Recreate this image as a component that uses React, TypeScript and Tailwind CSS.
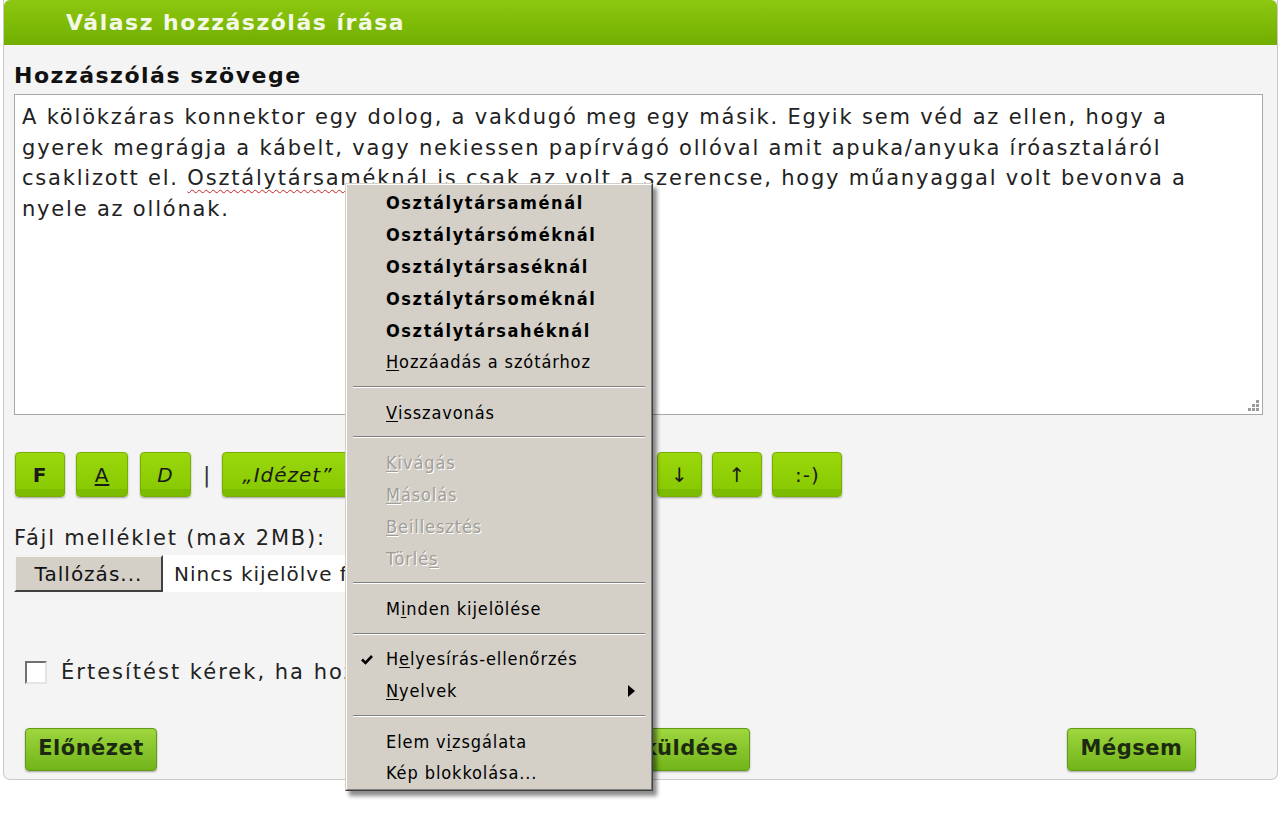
import React from "react";

type MenuItem =
  | { kind: "sep" }
  | {
      kind?: "item";
      label: string;
      key?: number;
      bold?: boolean;
      disabled?: boolean;
      checked?: boolean;
      submenu?: boolean;
    };

const menuItems: MenuItem[] = [
  { label: "Osztálytársaménál", bold: true },
  { label: "Osztálytársóméknál", bold: true },
  { label: "Osztálytársaséknál", bold: true },
  { label: "Osztálytársoméknál", bold: true },
  { label: "Osztálytársahéknál", bold: true },
  { label: "Hozzáadás a szótárhoz", key: 0 },
  { kind: "sep" },
  { label: "Visszavonás", key: 0 },
  { kind: "sep" },
  { label: "Kivágás", key: 0, disabled: true },
  { label: "Másolás", key: 0, disabled: true },
  { label: "Beillesztés", key: 0, disabled: true },
  { label: "Törlés", key: 5, disabled: true },
  { kind: "sep" },
  { label: "Minden kijelölése", key: 1 },
  { kind: "sep" },
  { label: "Helyesírás-ellenőrzés", key: 1, checked: true },
  { label: "Nyelvek", key: 0, submenu: true },
  { kind: "sep" },
  { label: "Elem vizsgálata", key: 6 },
  { label: "Kép blokkolása..." },
];

const AccessLabel = ({ label, index }: { label: string; index?: number }) => {
  if (index === undefined) return <>{label}</>;
  return (
    <>
      {label.slice(0, index)}
      <span className="underline underline-offset-2">{label[index]}</span>
      {label.slice(index + 1)}
    </>
  );
};

const ContextMenu = () => (
  <div className="absolute left-[345px] top-[183px] z-10 w-[308px] border border-t-[#d4d0c8] border-l-[#d4d0c8] border-r-[#404040] border-b-[#404040] bg-[#d4d0c8] shadow-[4px_5px_4px_rgba(0,0,0,0.45)] font-['DejaVu_Sans_Condensed','DejaVu_Sans',sans-serif] text-[18px] text-black">
    <div className="border border-t-white border-l-white border-r-[#808080] border-b-[#808080] pt-[2px]">
      {menuItems.map((item, i) =>
        item.kind === "sep" ? (
          <div key={i} className="flex h-[18.6px] items-center px-[6px]">
            <div className="h-[2px] w-full border-t border-t-[#808080] border-b border-b-white" />
          </div>
        ) : (
          <div
            key={i}
            className={`relative flex h-[31.8px] items-center pl-[39px] ${
              item.bold ? "font-bold tracking-[1.6px]" : "tracking-[0.9px]"
            } ${
              item.disabled
                ? "text-[#a09e98] [text-shadow:1px_1px_0_#ffffff]"
                : ""
            }`}
          >
            {item.checked && (
              <svg
                className="absolute left-[14px] top-[11px]"
                width="12"
                height="11"
                viewBox="0 0 12 11"
              >
                <path d="M1 5.5 L4.5 9 L11 2" stroke="#000" strokeWidth="2.6" fill="none" />
              </svg>
            )}
            <AccessLabel label={item.label} index={item.key} />
            {item.submenu && (
              <svg
                className="absolute right-[16px] top-[10px]"
                width="7"
                height="12"
                viewBox="0 0 7 12"
              >
                <path d="M0 0 L7 6 L0 12 Z" fill="#000" />
              </svg>
            )}
          </div>
        )
      )}
    </div>
  </div>
);

const ToolButton = ({
  children,
  className = "",
}: {
  children: React.ReactNode;
  className?: string;
}) => (
  <button className={`relative flex h-[45px] items-center justify-center overflow-hidden rounded-[4px] border border-[#79ad00] bg-[linear-gradient(#9ad80c,#86c700)] text-[20px] tracking-[1px] text-[#1a1a1a] shadow-[0_1px_2px_rgba(0,0,0,0.35)] ${className}`}>
    <span className="relative z-[1]">{children}</span>
    <span className="absolute bottom-0 left-0 right-0 h-[7px] bg-[#7bbb00]" />
  </button>
);

const ActionButton = ({
  children,
  className = "",
}: {
  children: React.ReactNode;
  className?: string;
}) => (
  <button className={`flex h-[43px] items-center justify-center rounded-[4px] border border-[#5e9a16] bg-[linear-gradient(#9ed63e,#72b41a)] text-[21px] font-bold tracking-[0.5px] text-[#1c2a10] shadow-[0_1px_2px_rgba(0,0,0,0.35)] ${className}`}>
    {children}
  </button>
);

export default function App() {
  return (
    <div className="relative min-h-screen bg-white font-['DejaVu_Sans',sans-serif] text-[#1f1f1f]">
      <div className="ml-[3px] w-[1275px] rounded-b-[7px] border border-t-0 border-[#c9c9c9] bg-[#f4f4f4] pb-[8px]">
        {/* heading bar */}
        <div className="flex h-[45px] items-center rounded-t-[6px] bg-[linear-gradient(#8cc810,#72ae00)] pl-[62px] text-[22px] font-bold tracking-[1.5px] text-[#f4f8e6]">
          Válasz hozzászólás írása
        </div>

        <div className="px-[10px]">
          <div className="pt-[16px] text-[22px] font-bold leading-[30px] tracking-[1.5px] text-[#111]">
            Hozzászólás szövege
          </div>

          {/* message box */}
          <div className="relative mt-[3px] h-[321px] w-[1249px] border border-[#a8a8a8] bg-white px-[7px] pt-[7px] text-[21px] leading-[30.5px] tracking-[1.8px] text-[#222]">
            A kölökzáras konnektor egy dolog, a vakdugó meg egy másik. Egyik sem véd az ellen, hogy a
            <br />
            gyerek megrágja a kábelt, vagy nekiessen papírvágó ollóval amit apuka/anyuka íróasztaláról
            <br />
            csaklizott el.{" "}
            <span className="underline decoration-wavy decoration-[#d02020] decoration-1 underline-offset-4">
              Osztálytársaméknál
            </span>{" "}
            is csak az volt a szerencse, hogy műanyaggal volt bevonva a
            <br />
            nyele az ollónak.
            <svg className="absolute bottom-[2px] right-[2px]" width="14" height="14" viewBox="0 0 14 14">
              <g fill="#9a9a9a">
                <rect x="10" y="2" width="3" height="3" />
                <rect x="6" y="6" width="3" height="3" />
                <rect x="10" y="6" width="3" height="3" />
                <rect x="2" y="10" width="3" height="3" />
                <rect x="6" y="10" width="3" height="3" />
                <rect x="10" y="10" width="3" height="3" />
              </g>
            </svg>
          </div>

          {/* formatting toolbar */}
          <div className="mt-[37px] flex items-center">
            <ToolButton className="ml-[1px] w-[50px] font-bold">F</ToolButton>
            <ToolButton className="ml-[11px] w-[52px]">
              <span className="underline underline-offset-2">A</span>
            </ToolButton>
            <ToolButton className="ml-[12px] w-[51px] italic">D</ToolButton>
            <span className="ml-[12px] mr-[12px] text-[22px] text-[#333]">|</span>
            <ToolButton className="w-[130px] italic">„Idézet”</ToolButton>
            <ToolButton className="ml-[10px] w-[110px]">Link</ToolButton>
            <ToolButton className="ml-[10px] w-[80px]">Kép</ToolButton>
            <ToolButton className="ml-[10px] w-[78px]">Videó</ToolButton>
            <ToolButton className="ml-[7px] w-[45px]">↓</ToolButton>
            <ToolButton className="ml-[10px] w-[50px]">↑</ToolButton>
            <ToolButton className="ml-[10px] w-[70px]">:-)</ToolButton>
          </div>

          {/* attachment */}
          <div className="mt-[28px] text-[21px] leading-[26px] tracking-[1.8px] text-[#222]">
            Fájl melléklet (max 2MB):
          </div>
          <div className="mt-[4px] flex h-[37px] items-stretch text-[20px] tracking-[1px]">
            <button className="w-[149px] border-2 border-t-[#f4f2ee] border-l-[#f4f2ee] border-r-[#404040] border-b-[#404040] bg-[#d4d0c8] text-[#111]">
              Tallózás...
            </button>
            <div className="flex w-[240px] items-center bg-white pl-[11px] text-[#222]">
              Nincs kijelölve fájl.
            </div>
          </div>

          {/* notify */}
          <div className="mt-[65px] flex items-center pl-[11px] text-[21px] tracking-[2px] text-[#222]">
            <span className="h-[23px] w-[22px] border-2 border-t-[#707070] border-l-[#707070] border-r-[#e4e4e4] border-b-[#e4e4e4] bg-white" />
            <span className="ml-[14px]">
              Értesítést kérek, ha hozzászólnak a témához
            </span>
          </div>

          {/* actions */}
          <div className="mt-[39px] flex items-center justify-between pl-[11px] pr-[71px]">
            <ActionButton className="w-[132px]">Előnézet</ActionButton>
            <ActionButton className="w-[276px]">Hozzászólás küldése</ActionButton>
            <ActionButton className="w-[129px]">Mégsem</ActionButton>
          </div>
        </div>
      </div>

      <ContextMenu />
    </div>
  );
}
